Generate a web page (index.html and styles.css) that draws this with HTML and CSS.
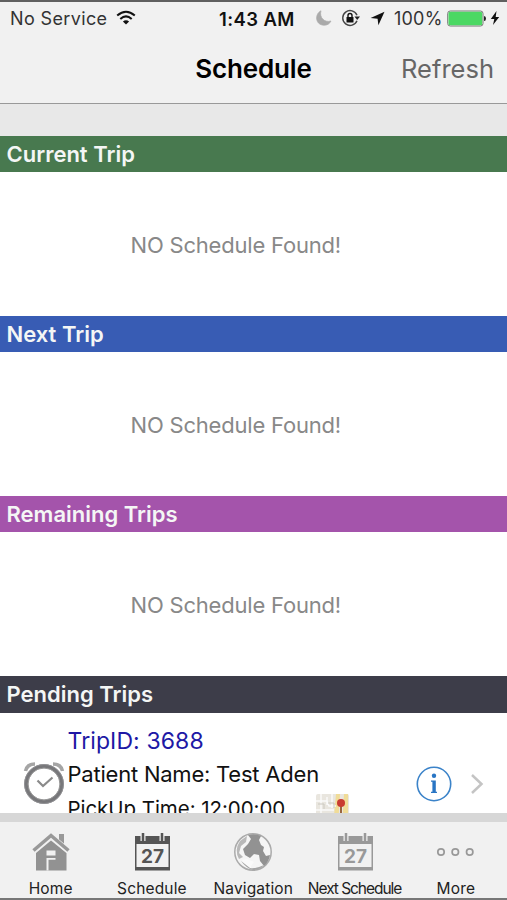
FILE: index.html
```html
<!DOCTYPE html>
<html lang="en">
<head>
<meta charset="utf-8">
<title>Schedule</title>
<link rel="stylesheet" href="styles.css">
</head>
<body>
<div class="app">
  <div class="status">
    <span class="carrier">No Service</span>
    <svg class="wifi" width="20" height="16" viewBox="0 0 20 16" fill="none" stroke="#111" stroke-width="2"><path d="M1.2 5.6Q10-2.2 18.8 5.6M4.3 9Q10 3.8 15.7 9"/><path d="M10 14.6 6.9 11.5Q10 8.8 13.1 11.5Z" fill="#111" stroke="none"/></svg>
    <span class="time">1:43 AM</span>
    <svg class="moon" width="16" height="16" viewBox="0 0 16 16"><path d="M5 .8C-1.500 4-1 15 8 15.200q5 0 7-4.200C8.500 13 3 7.500 5 .8Z" fill="#aaa" stroke="#aaa" stroke-width=".7"/></svg>
    <svg class="lock" width="20" height="18" viewBox="0 0 20 18"><path d="M16 11.800A7.400 7.400 0 1 1 16 6.200" fill="none" stroke="#444" stroke-width="1.400"/><path d="M13.500 7.500H19L16.200 11Z" fill="#222"/><rect x="5.500" y="8" width="7" height="5.500" rx=".6" fill="#111"/><path d="M7 8V6.500a2 2 0 0 1 4 0V8" fill="none" stroke="#111" stroke-width="1.400"/></svg>
    <svg class="arrow" width="15" height="15" viewBox="0 0 15 15"><path d="M14.500.7 8.400 14.300 7.600 7.700.6 7Z" fill="#111"/></svg>
    <span class="percent">100%</span>
    <svg class="battery" width="40" height="17" viewBox="0 0 40 17"><rect x=".7" y="1" width="35.300" height="15" rx="2.500" fill="#f3f3f3" stroke="#777"/><rect x="1.500" y="1.800" width="33.700" height="13.400" rx="1.500" fill="#4bd863"/><path d="M37 6q2 0 2 2.500t-2 2.500Z" fill="#222"/></svg>
    <svg class="bolt" width="10" height="16" viewBox="0 0 10 16"><path d="M6.500 1 .8 9h3.500L3 15 9.200 7H5.700Z" fill="#111"/></svg>
  </div>
  <header class="nav">
    <span></span>
    <h1 class="title">Schedule</h1>
    <span class="refresh">Refresh</span>
  </header>
  <main class="content">
    <section>
      <h2 class="bar current">Current Trip</h2>
      <p class="empty">NO Schedule Found!</p>
    </section>
    <section>
      <h2 class="bar next">Next Trip</h2>
      <p class="empty">NO Schedule Found!</p>
    </section>
    <section>
      <h2 class="bar remaining">Remaining Trips</h2>
      <p class="empty">NO Schedule Found!</p>
    </section>
    <section>
      <h2 class="bar pending">Pending Trips</h2>
      <div class="trip">
        <svg class="clock" width="42" height="44" viewBox="0 0 42 44" fill="none"><path d="M2.500 10Q4 3 12 3M30 3Q38 3 39.500 10" stroke="#a5a5a5" stroke-width="3.500"/><circle cx="21" cy="23" r="17.700" fill="#fff" stroke="#77777a" stroke-width="4"/><circle cx="21" cy="23" r="19.500" stroke="#929295"/><circle cx="21" cy="23" r="16" stroke="#999"/><path d="m14.500 19.500 5.500 5.500 9.500-8.500" stroke="#8a8a8a" stroke-width="2.200"/></svg>
        <div class="details">
          <div class="trip-id">TripID: 3688</div>
          <div class="patient">Patient Name: Test Aden</div>
          <div class="pickup-row"><span class="pickup">PickUp Time: 12:00:00</span>
            <svg class="map" width="33" height="33" viewBox="0 0 33 33"><rect width="33" height="33" rx="2" fill="#e9e6df"/><path d="M20 0h4l-2 33h-5ZM28 0h4v33h-6Z" fill="#f0dc98"/><path d="M0 7h11l2 5h7M5 0v33M11 3v8M0 16h18M16 0v14" stroke="#fafafa" stroke-width="1.500" fill="none"/><path d="M2 10h6v5m4-6h6v5" stroke="#cbc8c0" fill="none"/><path d="M25 10v10" stroke="#9a653e" stroke-width="2"/><circle cx="25" cy="9" r="4" fill="#c93b30"/></svg>
          </div>
        </div>
        <svg class="info" width="36" height="36" viewBox="0 0 36 36"><circle cx="18" cy="18" r="16.700" fill="none" stroke="#3b83c9" stroke-width="1.600"/><circle cx="18" cy="9.800" r="2.200" fill="#2875c4"/><path d="M15 14.500h4.800v11.200H21V27h-6v-1.300h1.400v-9.900H15Z" fill="#2875c4"/></svg>
        <svg class="chevron" width="14" height="22" viewBox="0 0 14 22"><path d="m2 2 9.500 9L2 20" fill="none" stroke="#c4c4c4" stroke-width="2.500"/></svg>
      </div>
    </section>
  </main>
  <nav class="tabs">
    <div class="tab">
      <svg width="40" height="40" viewBox="0 0 40 40"><path d="M28 2h5v14l-5-5Z" fill="#999"/><path d="M5 21 20 8.500 35.500 21V38.500H5Z" fill="#929292"/><path d="M2.500 19 20 4 37.500 19" fill="none" stroke="#f1f1f1" stroke-width="5.500"/><path d="M2.500 18.500 20 3.500 37.500 18.500" fill="none" stroke="#999" stroke-width="3.500"/><path d="M15.500 18.500h9v5h-9ZM15.500 26h9v1.700h-7V38.500h-2Z" fill="#f1f1f1"/></svg>
      <span class="home">Home</span>
    </div>
    <div class="tab dark">
      <svg width="40" height="40" viewBox="0 0 40 40"><path d="M3 4h35v34.500H3Z" fill="currentColor"/><path d="M4.500 12h32v23h-32Z" fill="#f1f1f1"/><path d="M11 1v8M30 1v8" stroke="#f1f1f1" stroke-width="5"/><path d="M11 1v8M30 1v8" stroke="currentColor" stroke-width="2.500"/><text x="20.500" y="30.500" text-anchor="middle" class="date">27</text></svg>
      <span class="schedule">Schedule</span>
    </div>
    <div class="tab">
      <svg width="40" height="40" viewBox="0 0 40 40"><circle cx="20" cy="20" r="18.200" fill="#f5f5f5" stroke="#aaa" stroke-width="1.500"/><path d="M15 3Q22 1 28 4L26 8l2 5 3 2-1 4 3 5 4-1Q36 30 31 34L27 29l-1-6-5-1-4 4-5-3-2-6 5-5 3-5Z" fill="#929292"/><path d="M7 9 14 4l-1 6-5 4-2 7 4 4-4 2Q1 18 7 9Z" fill="#b8b8b8"/><path d="M9 28l5-1 7 3-3 4v3Q11 35 9 28Z" fill="#fafafa"/><path d="M8 29q5 7 12 9 7 0 11-5-8 4-14 3Z" fill="#a5a5a5"/></svg>
      <span class="navigation">Navigation</span>
    </div>
    <div class="tab">
      <svg width="40" height="40" viewBox="0 0 40 40"><path d="M3 4h35v34.500H3Z" fill="currentColor"/><path d="M4.500 12h32v23h-32Z" fill="#f1f1f1"/><path d="M11 1v8M30 1v8" stroke="#f1f1f1" stroke-width="5"/><path d="M11 1v8M30 1v8" stroke="currentColor" stroke-width="2.500"/><text x="20.500" y="30.500" text-anchor="middle" class="date">27</text></svg>
      <span class="next-schedule">Next Schedule</span>
    </div>
    <div class="tab">
      <svg width="40" height="40" viewBox="0 0 40 40" fill="none" stroke="#999" stroke-width="1.700"><circle cx="5" cy="20" r="3.200"/><circle cx="19.300" cy="20" r="3.200"/><circle cx="33.700" cy="20" r="3.200"/></svg>
      <span class="more">More</span>
    </div>
  </nav>
</div>
</body>
</html>
```

FILE: styles.css
```css
* { box-sizing: border-box; }
body { margin: 0; font-family: Inter, "Liberation Sans", sans-serif; color: #111; }
h1, h2, p { margin: 0; }
svg { display: block; flex: none; }
.app { display: flex; flex-direction: column; height: 900px; overflow: hidden; background: #f1f1f1; border-top: 2px solid #606060; border-bottom: 2px solid #777; }
.status { display: flex; align-items: center; height: 32px; padding-left: 10px; white-space: nowrap; flex: none; }
.status span { font-size: 18px; line-height: 32px; flex: none; padding-top: 1px; }
.status .carrier { width: 97px; color: #333; letter-spacing: .37px; }
.wifi { margin-left: 9px; }
.status .time { width: 76px; margin-left: 83px; font-size: 18.500px; font-weight: 600; letter-spacing: .4px; }
.moon { margin-left: 21px; }
.lock { margin-left: 9px; }
.arrow { margin-left: 9px; }
.status .percent { width: 48px; margin-left: 9px; color: #333; letter-spacing: .2px; }
.battery { margin-left: 5px; }
.bolt { margin-left: 3px; }
.nav { display: grid; grid-template-columns: 1fr auto 1fr; height: 70px; padding-right: 13px; padding-left: 13px; border-bottom: 1.500px solid #999; flex: none; line-height: 69px; }
.title { font-size: 26px; font-weight: 600; letter-spacing: -.15px; line-height: 69px; color: #000; }
.refresh { justify-self: end; font-size: 25.500px; color: #666; }
.content { height: 709px; padding-top: 32px; background: #e8e8e8; overflow: hidden; flex: none; }
.bar { height: 36px; padding-left: 6.500px; font-size: 22px; font-weight: 600; line-height: 37px; color: #f4f6f5; }
.current { background: #48794f; }
.next { background: #385cb4; }
.remaining { background: #a454ab; }
.pending { height: 37px; background: #3d3d49; }
.empty { height: 144px; padding-left: 130.500px; background: #fff; color: #888; font-size: 22px; letter-spacing: -.2px; line-height: 146px; }
.trip { display: flex; height: 144px; padding: 0 23px; background: #fff; }
.clock { margin-top: 48px; }
.details { width: 351px; padding: 12px 0 0 2.500px; }
.trip-id { height: 33px; font-size: 23px; letter-spacing: .1px; line-height: 33px; color: #2018a5; }
.patient { height: 33px; font-size: 22px; letter-spacing: -.22px; line-height: 33px; }
.pickup-row { display: flex; height: 33px; }
.pickup { width: 248.500px; font-size: 20.500px; line-height: 36px; letter-spacing: -.05px; }
.map { margin-top: 3px; }
.info { margin-top: 53px; }
.chevron { margin-top: 60px; margin-left: 18px; }
.tabs { display: grid; grid-template-columns: repeat(5, 101.300px); height: 85px; border-top: 9px solid #d7d7d7; background: #f1f1f1; flex: none; }
.tab { display: flex; flex-direction: column; align-items: center; padding-top: 10px; color: #999; }
.tab.dark { color: #555; }
.tab span { color: #222; font-size: 15.500px; line-height: 20px; margin-top: 7px; white-space: nowrap; letter-spacing: .15px; }
.tab .next-schedule { letter-spacing: -1.050px; }
.date { font-size: 19px; font-weight: 700; fill: currentColor; }
```
